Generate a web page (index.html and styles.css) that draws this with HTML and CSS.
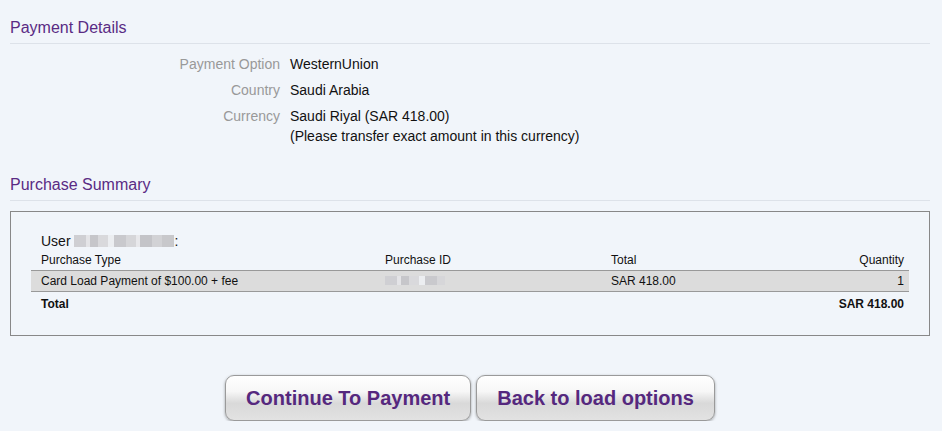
FILE: index.html
```html
<!DOCTYPE html>
<html>
<head>
<meta charset="utf-8">
<link rel="stylesheet" href="styles.css">
</head>
<body>
<div class="page">
  <h2 class="section-title">Payment Details</h2>
  <div class="details">
    <div class="label">Payment Option</div>
    <div class="value">WesternUnion</div>
    <div class="label">Country</div>
    <div class="value">Saudi Arabia</div>
    <div class="label">Currency</div>
    <div class="value">Saudi Riyal (SAR 418.00)<br>(Please transfer exact amount in this currency)</div>
  </div>

  <h2 class="section-title summary-title">Purchase Summary</h2>
  <div class="summary-box">
    <div class="user">User <span class="blur blur-user"></span>:</div>
    <table class="purchases">
      <colgroup>
        <col class="c1"><col class="c2"><col class="c3"><col class="c4">
      </colgroup>
      <tr class="head">
        <td>Purchase Type</td><td>Purchase ID</td><td>Total</td><td class="num">Quantity</td>
      </tr>
      <tr class="item">
        <td>Card Load Payment of $100.00 + fee</td><td><span class="blur blur-id"></span></td><td>SAR 418.00</td><td class="num">1</td>
      </tr>
      <tr class="total">
        <td>Total</td><td></td><td></td><td class="num">SAR 418.00</td>
      </tr>
    </table>
  </div>

  <div class="actions">
    <button class="btn">Continue To Payment</button>
    <button class="btn">Back to load options</button>
  </div>
</div>
</body>
</html>
```

FILE: styles.css
```css
html, body {
  margin: 0;
  padding: 0;
  background: #f1f5fa;
}
body {
  font-family: "Liberation Sans", Arial, sans-serif;
  color: #111;
}
.page {
  padding: 0 12px 0 10px;
}
.section-title {
  margin: 0;
  padding: 18px 0 6px;
  font-size: 16px;
  line-height: 19px;
  font-weight: normal;
  color: #5a2b84;
  border-bottom: 1px solid #dde2e9;
}
.details {
  display: grid;
  grid-template-columns: 270px 1fr;
  column-gap: 10px;
  row-gap: 6px;
  margin-top: 10px;
  font-size: 14px;
  line-height: 20px;
}
.label {
  text-align: right;
  color: #999;
}
.value {
  color: #111;
}
.summary-title {
  padding-top: 29px;
}
.summary-box {
  margin-top: 10px;
  border: 1px solid #888;
  padding: 20px 20px 21px 20px;
}
.user {
  font-size: 14px;
  line-height: 18px;
  padding-left: 10px;
}
.blur {
  display: inline-block;
  vertical-align: middle;
  background:
    linear-gradient(90deg, #cfcfd3 0 12px, #e4e4e7 12px 16px, #c6c6ca 16px 24px, #d9d9dc 24px 34px, #eceef1 34px 40px, #c9c9cd 40px 52px, #d6d6d9 52px 62px, #e8e8eb 62px 66px, #c4c4c8 66px 78px, #d2d2d5 78px 88px, #c8c8cb 88px 100px);
}
.blur-user {
  width: 100px;
  height: 12px;
  margin-top: -2px;
}
.blur-id {
  width: 60px;
  height: 9px;
  margin-top: -3px;
}
.purchases {
  width: 100%;
  border-collapse: collapse;
  font-size: 12px;
  line-height: 20px;
  table-layout: fixed;
}
.c1 { width: 344px; }
.c2 { width: 226px; }
.c3 { width: 226px; }
.purchases td {
  padding: 0 0 0 10px;
  white-space: nowrap;
}
.purchases td.num {
  text-align: right;
  padding-right: 5px;
}
.item td {
  background: #dcdcdc;
  border-top: 1px solid #999;
  border-bottom: 1px solid #999;
}
.total td {
  font-weight: bold;
  padding-top: 2px;
}
.actions {
  display: flex;
  justify-content: center;
  gap: 5px;
  margin-top: 39px;
}
.btn {
  font-family: "Liberation Sans", Arial, sans-serif;
  font-size: 20px;
  font-weight: bold;
  color: #55287e;
  height: 46px;
  padding: 0 20px;
  border: 1px solid #9a9a9a;
  border-radius: 9px;
  background: linear-gradient(#ffffff 0%, #f7f7f7 35%, #e6e6e6 50%, #d9d9d9 62%, #e2e2e2 100%);
  box-shadow: 0 1px 3px rgba(0,0,0,0.35);
  cursor: pointer;
}
```
